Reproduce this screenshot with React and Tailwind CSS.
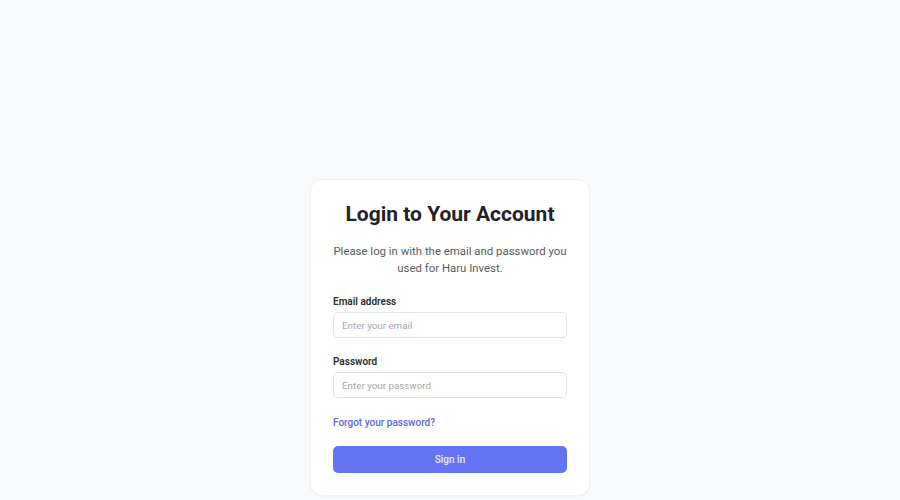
const App = () => {
  return (
    <div
      className="min-h-screen bg-[#f8f9fa] flex justify-center items-start pt-[179px]"
      style={{ fontFamily: "Roboto, 'Liberation Sans', sans-serif" }}
    >
      <div className="w-[280px] bg-white rounded-[12px] border border-[#eff0f2] shadow-[0_1px_2px_rgba(0,0,0,0.03)] px-[22px] pt-[20px] pb-[22px]">
        <h1 className="text-[21px] leading-[28px] font-bold text-[#1f2226] text-center">
          Login to Your Account
        </h1>
        <p className="mt-[15px] -mx-[6px] text-[11.4px] leading-[17px] text-[#555b63] text-center">
          Please log in with the email and password you used for Haru Invest.
        </p>

        <form className="mt-[18px] flex flex-col" onSubmit={(e) => e.preventDefault()}>
          <label className="text-[10px] leading-[14px] font-semibold text-[#2a2d31]">
            Email address
          </label>
          <input
            type="email"
            placeholder="Enter your email"
            className="mt-[3px] h-[26px] w-full rounded-[5px] border border-[#dfe2e6] px-[8px] text-[9.8px] text-[#2a2d31] placeholder:text-[#a3a8af] outline-none"
          />

          <label className="mt-[17px] text-[10px] leading-[14px] font-semibold text-[#2a2d31]">
            Password
          </label>
          <input
            type="password"
            placeholder="Enter your password"
            className="mt-[3px] h-[26px] w-full rounded-[5px] border border-[#dfe2e6] px-[8px] text-[9.8px] text-[#2a2d31] placeholder:text-[#a3a8af] outline-none"
          />

          <a href="#" className="mt-[18px] text-[10px] leading-[14px] font-medium text-[#5b6bd6]">
            Forgot your password?
          </a>

          <button
            type="submit"
            className="mt-[16px] h-[27px] w-full rounded-[5px] bg-[#6474f2] text-[10px] font-medium text-[#e8ebfd]"
          >
            Sign in
          </button>
        </form>
      </div>
    </div>
  );
};

export default App;
